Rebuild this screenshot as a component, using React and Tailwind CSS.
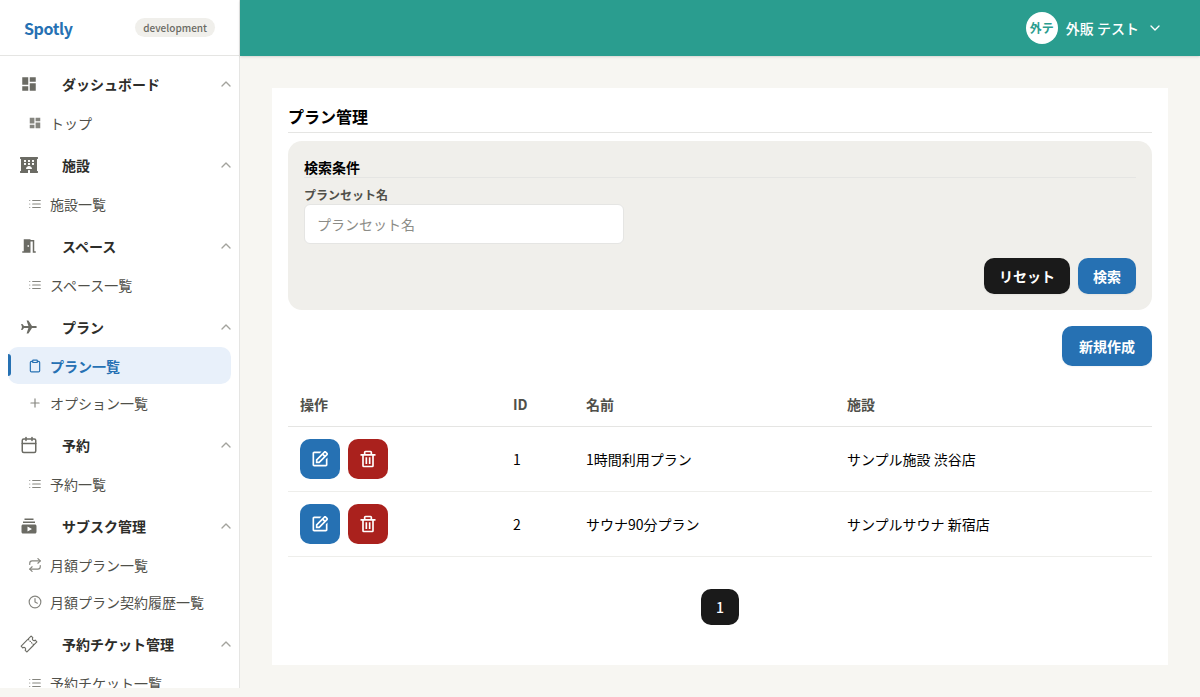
import React from 'react';
import { MdDashboard, MdMeetingRoom, MdSubscriptions } from 'react-icons/md';
import { FaHotel } from 'react-icons/fa';
import { IoTicketOutline } from 'react-icons/io5';
import {
  FiCalendar,
  FiChevronDown,
  FiChevronUp,
  FiClipboard,
  FiClock,
  FiList,
  FiPlus,
  FiRepeat,
} from 'react-icons/fi';
import { BiEdit, BiTrash } from 'react-icons/bi';

const PlaneIcon = ({ className }) => (
  <svg viewBox="0 0 18 18" fill="currentColor" className={className}>
    <path d="M16.8 9c0 .7-.5 1.1-1.2 1.1H12L8.4 15.6H6.6l1.8-5.5H4L2.4 12H1.1L2 9l-.9-3h1.3L4 7.9h4.4L6.6 2.4h1.8L12 7.9h3.6c.7 0 1.2.4 1.2 1.1z" />
  </svg>
);

const menu = [
  { label: 'ダッシュボード', icon: MdDashboard, items: [{ label: 'トップ', icon: MdDashboard }] },
  { label: '施設', icon: FaHotel, items: [{ label: '施設一覧', icon: FiList }] },
  { label: 'スペース', icon: MdMeetingRoom, items: [{ label: 'スペース一覧', icon: FiList }] },
  {
    label: 'プラン',
    icon: PlaneIcon,
    items: [
      { label: 'プラン一覧', icon: FiClipboard, active: true },
      { label: 'オプション一覧', icon: FiPlus },
    ],
  },
  { label: '予約', icon: FiCalendar, items: [{ label: '予約一覧', icon: FiList }] },
  {
    label: 'サブスク管理',
    icon: MdSubscriptions,
    items: [
      { label: '月額プラン一覧', icon: FiRepeat },
      { label: '月額プラン契約履歴一覧', icon: FiClock },
    ],
  },
  { label: '予約チケット管理', icon: IoTicketOutline, items: [{ label: '予約チケット一覧', icon: FiList }] },
];

const plans = [
  { id: 1, name: '1時間利用プラン', facility: 'サンプル施設 渋谷店' },
  { id: 2, name: 'サウナ90分プラン', facility: 'サンプルサウナ 新宿店' },
];

const MenuItem = ({ label, icon: Icon, active }) => (
  <a
    className={
      active
        ? 'relative flex items-center h-[37px] mx-2 pl-5 rounded-[10px] bg-[#e8f0fa] text-[#2671b3] font-bold text-sm'
        : 'relative flex items-center h-[37px] mx-2 pl-5 text-[#50504a] text-sm'
    }
  >
    {active && <span className="absolute left-0 top-[7px] w-[3px] h-[22px] rounded-r-sm bg-[#2671b3]" />}
    <Icon className={active ? 'w-3.5 h-3.5 mr-2 shrink-0' : 'w-3.5 h-3.5 mr-2 shrink-0 text-[#85857f]'} />
    <span className="whitespace-nowrap">{label}</span>
  </a>
);

const MenuGroup = ({ label, icon: Icon, items }) => (
  <div className="pt-1">
    <button className="flex items-center w-full h-10 pl-5 pr-[5px] text-sm font-bold text-[#2d2d2a]">
      <Icon className="w-[18px] h-[18px] mr-6 text-[#6b6b64]" />
      <span>{label}</span>
      <FiChevronUp className="w-4 h-4 ml-auto text-[#a3a39d]" />
    </button>
    {items.map((item) => (
      <MenuItem key={item.label} {...item} />
    ))}
  </div>
);

const Sidebar = () => (
  <aside className="w-60 h-[688px] shrink-0 bg-white border-r border-[#e5e5e3] overflow-hidden">
    <div className="flex items-center justify-between h-14 px-6 border-b border-[#e5e5e3]">
      <span className="text-base font-bold tracking-tight text-[#2671b3]">Spotly</span>
      <span className="h-[19px] px-2 rounded-full bg-[#f0efeb] text-[10px] leading-[19px] font-medium text-[#6b6b64]">
        development
      </span>
    </div>
    <nav className="pt-1">
      {menu.map((group) => (
        <MenuGroup key={group.label} {...group} />
      ))}
    </nav>
  </aside>
);

const Header = () => (
  <header className="flex items-center justify-end h-14 pr-[37px] bg-[#2a9d8f] text-white shadow-sm">
    <span className="flex items-center justify-center w-8 h-8 mr-2 rounded-full bg-white text-[#2a9d8f] text-xs font-bold">
      外テ
    </span>
    <span className="text-sm font-medium">外販 テスト</span>
    <FiChevronDown className="w-4 h-4 ml-2" />
  </header>
);

const SearchPanel = () => (
  <section className="mt-2 h-[169px] px-4 pt-4 rounded-[14px] bg-[#f0efeb]">
    <h2 className="h-[21px] text-sm leading-[21px] font-bold border-b border-[#e5e5e3]">検索条件</h2>
    <label htmlFor="planSet" className="block mt-2 h-[18px] text-xs leading-[18px] font-bold text-[#50504a]">
      プランセット名
    </label>
    <input
      id="planSet"
      type="text"
      placeholder="プランセット名"
      className="block w-80 h-10 px-3 text-sm bg-white border border-[#e5e5e3] rounded-md placeholder:text-[#8c8c87]"
    />
    <div className="flex justify-end gap-2 mt-3.5">
      <button className="w-[86px] h-9 rounded-[10px] bg-[#1a1a1a] text-white text-sm font-bold shadow-xs">
        リセット
      </button>
      <button className="w-[58px] h-9 rounded-[10px] bg-[#2671b3] text-white text-sm font-bold shadow-xs">
        検索
      </button>
    </div>
  </section>
);

const PlanTable = () => (
  <table className="w-full mt-[17px] table-fixed text-sm text-left">
    <colgroup>
      <col className="w-[213px]" />
      <col className="w-[73px]" />
      <col className="w-[261px]" />
      <col />
    </colgroup>
    <thead>
      <tr className="h-[43px] border-b border-[#e5e5e3] text-[#50504a]">
        <th className="px-3 font-bold">操作</th>
        <th className="px-3 font-bold">ID</th>
        <th className="px-3 font-bold">名前</th>
        <th className="px-3 font-bold">施設</th>
      </tr>
    </thead>
    <tbody>
      {plans.map((plan) => (
        <tr key={plan.id} className="h-[65px] border-b border-[#eeeeeb]">
          <td className="px-3">
            <div className="flex gap-2">
              <button className="flex items-center justify-center w-10 h-10 rounded-[10px] bg-[#2671b3] text-white">
                <BiEdit size={20} />
              </button>
              <button className="flex items-center justify-center w-10 h-10 rounded-[10px] bg-[#aa211d] text-white">
                <BiTrash size={20} />
              </button>
            </div>
          </td>
          <td className="px-3">{plan.id}</td>
          <td className="px-3">{plan.name}</td>
          <td className="px-3">{plan.facility}</td>
        </tr>
      ))}
    </tbody>
  </table>
);

export default function App() {
  return (
    <div
      lang="ja"
      className="flex h-[697px] overflow-hidden bg-[#f7f6f2] text-black font-['Noto_Sans_CJK_JP',sans-serif]"
    >
      <Sidebar />
      <div className="flex-1">
        <Header />
        <main className="m-8 h-[577px] p-4 bg-white">
          <h1 className="h-[29px] text-base leading-6 font-bold border-b border-[#e5e5e3]">プラン管理</h1>
          <SearchPanel />
          <div className="flex justify-end mt-4">
            <button className="w-[90px] h-10 rounded-[10px] bg-[#2671b3] text-white text-sm font-bold shadow-xs">
              新規作成
            </button>
          </div>
          <PlanTable />
          <div className="flex justify-center mt-8">
            <button className="w-[38px] h-9 rounded-[10px] bg-[#1a1a1a] text-white text-sm font-medium">1</button>
          </div>
        </main>
      </div>
    </div>
  );
}
